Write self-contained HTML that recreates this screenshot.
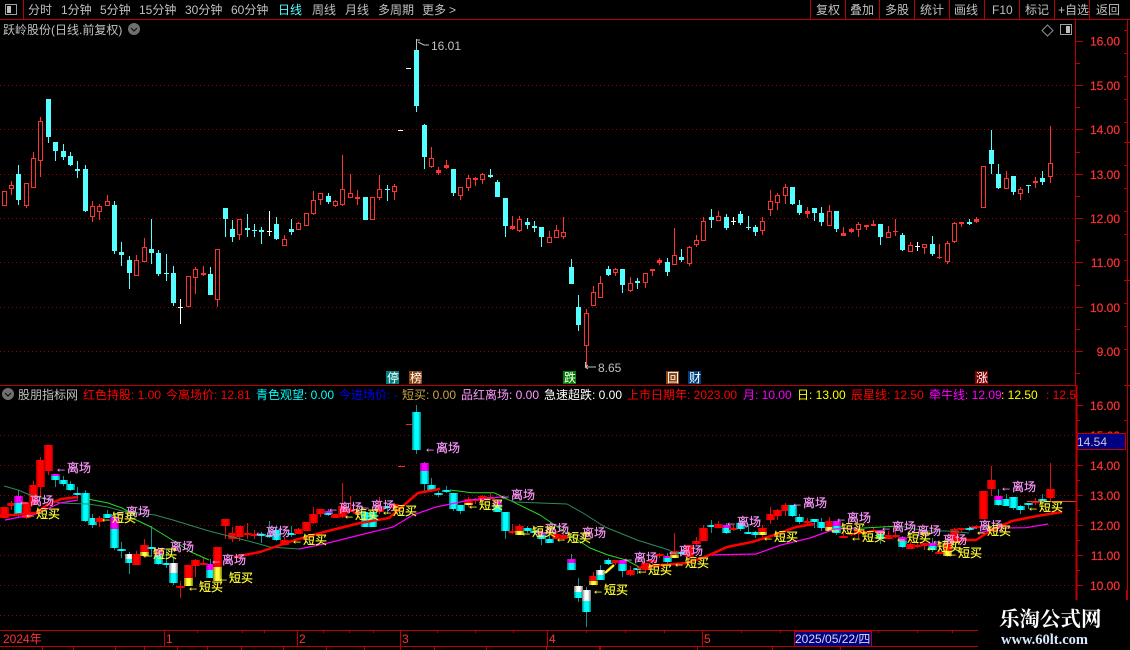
<!DOCTYPE html>
<html lang="zh"><head><meta charset="utf-8"><title>K线图</title>
<style>
html,body{margin:0;padding:0;background:#000;width:1130px;height:650px;overflow:hidden}
svg{display:block;position:absolute;left:0;top:0}
text{font-family:"Liberation Sans","WenQuanYi Zen Hei","Noto Sans CJK SC",sans-serif;font-size:12px;white-space:pre}
.m text{fill:#c0c0c0}
.ax text{fill:#ff3232;stroke:#ff3232;stroke-width:.2;text-anchor:end;font-size:12px}
.p text{fill:#ff99ff;stroke:#ff99ff;stroke-width:.2}
.b text{fill:#ffff33;stroke:#ffff33;stroke-width:.2}
</style></head><body>
<svg id="s" width="1130" height="650" viewBox="0 0 1130 650" xmlns="http://www.w3.org/2000/svg">
<defs>
<linearGradient id="gc"><stop offset="0" stop-color="#007f7f"/><stop offset=".3" stop-color="#00ffff"/><stop offset=".7" stop-color="#00ffff"/><stop offset="1" stop-color="#007f7f"/></linearGradient>
<linearGradient id="gr"><stop offset="0" stop-color="#a00000"/><stop offset=".25" stop-color="#ff0000"/><stop offset=".75" stop-color="#ff0000"/><stop offset="1" stop-color="#a00000"/></linearGradient>
<linearGradient id="gm"><stop offset="0" stop-color="#900090"/><stop offset=".3" stop-color="#ff00ff"/><stop offset=".7" stop-color="#ff00ff"/><stop offset="1" stop-color="#900090"/></linearGradient>
<linearGradient id="gw"><stop offset="0" stop-color="#777"/><stop offset=".35" stop-color="#fff"/><stop offset=".65" stop-color="#fff"/><stop offset="1" stop-color="#777"/></linearGradient>
<linearGradient id="gy"><stop offset="0" stop-color="#808000"/><stop offset=".35" stop-color="#ffff40"/><stop offset=".65" stop-color="#ffff40"/><stop offset="1" stop-color="#808000"/></linearGradient>
</defs>
<rect width="1130" height="650" fill="#000"/>
<g stroke="#a00000" stroke-width="1" stroke-dasharray="1 3" fill="none">
<path d="M0 85.5H1076M0 129.5H1076M0 174.5H1076M0 218.5H1076M0 262.5H1076M0 307.5H1076M0 351.5H1076M0 435.5H1076M0 465.5H1076M0 495.5H1076M0 525.5H1076M0 555.5H1076M0 585.5H1076M0 615.5H978"/>
</g>
<g id="top" shape-rendering="crispEdges"></g>
<g id="bot" shape-rendering="crispEdges"></g>

<!-- lower panel lines -->
<g fill="none" stroke-linejoin="round">
<polyline stroke="#2e8b57" stroke-width="1" points="4,486 18,490 30,495 60,503 88,504 108,507 122,511 155,515 173,520 209,531 252,542 270,547 299,549"/>
<polyline stroke="#22dd22" stroke-width="1" points="88,499 108,503 122,508 135,515"/>
<polyline stroke="#22dd22" stroke-width="1" points="130,517 151,527 169,538 191,552 209,560"/>
<polyline stroke="#22dd22" stroke-width="1" points="450,490 472,492.7 494,492.7 505,498 540,515"/>
<polyline stroke="#2e8b57" stroke-width="1" points="500,497 515,502 540,503 567,504 583,513 605,527 637,540 669,550 677,555"/>
<polyline stroke="#22dd22" stroke-width="1" points="540,515 565,532 590,548 608,555 626,560 641,568"/>
<polyline stroke="#2e8b57" stroke-width="1" points="900,526 925,531 947,531 969,533"/>
<polyline stroke="#22dd22" stroke-width="1" points="832,529 864,528 900,526"/>
<polyline stroke="#ff00ff" stroke-width="1.2" points="5,520 36,514 60,503 78,500"/>
<polyline stroke="#ff00ff" stroke-width="1.2" points="299,549 324,544 360,535 393,527 413,515 436,507 470,500 501,497"/>
<polyline stroke="#ff00ff" stroke-width="1.2" points="709,555 756,554 781,545 810,538 835,529 860,528"/>
<polyline stroke="#ff00ff" stroke-width="1.2" points="979,533 997,528 1026,527.7 1048,524"/>
<polyline stroke="#ff0000" stroke-width="2.5" points="0,516 36,513 47,505 61,499 78,497"/>
<polyline stroke="#ff0000" stroke-width="2.5" points="234,557 260,552 295,540 324,532 360,523 389,518 396,512 418,493 440,489"/>
<polyline stroke="#ffff20" stroke-width="2.5" points="605,573 614,565"/>
<polyline stroke="#ff0000" stroke-width="2.5" points="637,568 662,565 687,563 705,557 727,547 752,542 774,535 796,527 814,524"/>
<polyline stroke="#ff0000" stroke-width="2.5" points="947,540 976,540 990,531 1012,521 1037,516 1062,512"/>
<path d="M1027 501.5H1076" stroke="#ff3020" stroke-width="1"/>
</g>

<!-- top bar -->
<g stroke="#c00000" fill="none" shape-rendering="crispEdges">
<path d="M0 19.5H1130M23.5 0V19M810.5 0V19M845.5 0V19M879.5 0V19M914.5 0V19M949.5 0V19M984.5 0V19M1019.5 0V19M1054.5 0V19M1089.5 0V19"/>
<path d="M0 385.5H1076M1075.5 20V385"/>
<path d="M0 630.5H978M0 646.5H978M164.5 630V646M297.5 630V646M400.5 630V646M547.5 630V646M702.5 630V646"/>
<path d="M1076.5 385V600" stroke-width="2"/>
<path d="M1127.5 20V600"/>
<path d="M1076 41.5H1083M1076 63.5H1080M1076 85.5H1083M1076 107.5H1080M1076 129.5H1083M1076 152.5H1080M1076 174.5H1083M1076 196.5H1080M1076 218.5H1083M1076 240.5H1080M1076 262.5H1083M1076 285.5H1080M1076 307.5H1083M1076 329.5H1080M1076 351.5H1083M1076 373.5H1080"/>
<path d="M1076 405.5H1083M1076 420.5H1080M1076 465.5H1083M1076 480.5H1080M1076 495.5H1083M1076 510.5H1080M1076 525.5H1083M1076 540.5H1080M1076 555.5H1083M1076 570.5H1080M1076 585.5H1083"/>
<path d="M1124 30.5H1127M1124 53.5H1127M1124 76.5H1127M1124 99.5H1127M1124 122.5H1127M1124 142.5H1130M1124 165.5H1127M1124 188.5H1127M1124 211.5H1127M1124 234.5H1127M1124 260.5H1127M1124 280.5H1130M1124 303.5H1127M1124 326.5H1127M1124 349.5H1127M1124 385.5H1130M1124 420.5H1127"/>
<path d="M197.5 630V633M242.5 630V633M264.5 630V633M323.5 630V633M349.5 630V633M373.5 630V633M437.5 630V633M475.5 630V633M513.5 630V633M586.5 630V633M625.5 630V633M664.5 630V633M741.5 630V633M780.5 630V633M878.5 630V633M917.5 630V633M952.5 630V633"/>
<path d="M42.5 646V650M73.5 646V650M115.5 646V650M144.5 646V650M177.5 646V650M207.5 646V650M241.5 646V650M283.5 646V650M326.5 646V650M364.5 646V650M400.5 646V650M434.5 646V650M486.5 646V650M546.5 646V650M600.5 646V650M599.5 646V650M697.5 646V650M772.5 646V650M840.5 646V650"/>
</g>
<g fill="none" stroke="#a0a0a0" shape-rendering="crispEdges">
<rect x="5.5" y="4.5" width="11" height="10" stroke-width="1"/>
<rect x="1060.5" y="24.5" width="11" height="10" stroke-width="1"/>
</g>
<rect x="7" y="6" width="4" height="7" fill="#c0c0c0"/>
<rect x="1066" y="26" width="4" height="7" fill="#c0c0c0"/>
<path d="M1047.5 25L1053 30.5L1047.5 36L1042 30.5Z" fill="none" stroke="#909090"/>

<g class="m">
<text x="28" y="14">分时</text><text x="61" y="14">1分钟</text><text x="100" y="14">5分钟</text><text x="139" y="14">15分钟</text><text x="185" y="14">30分钟</text><text x="231" y="14">60分钟</text>
<text x="278" y="14" style="fill:#55ffff">日线</text>
<text x="312" y="14">周线</text><text x="345" y="14">月线</text><text x="378" y="14">多周期</text><text x="422" y="14">更多</text><text x="449" y="14">&gt;</text>
<text x="816" y="14">复权</text><text x="850" y="14">叠加</text><text x="885" y="14">多股</text><text x="920" y="14">统计</text><text x="954" y="14">画线</text><text x="992" y="14">F10</text><text x="1025" y="14">标记</text><text x="1058" y="14">+自选</text><text x="1096" y="14">返回</text>
<text x="3" y="34">跃岭股份(日线.前复权)</text>
<text x="18" y="399">股朋指标网</text>
<text x="431" y="50">16.01</text>
<text x="598" y="372">8.65</text>
</g>
<circle cx="134" cy="29" r="6" fill="#707070"/><path d="M131 28l3 3 3-3" stroke="#111" fill="none" stroke-width="1.2"/>
<circle cx="8" cy="394" r="6" fill="#707070"/><path d="M5 393l3 3 3-3" stroke="#111" fill="none" stroke-width="1.2"/>
<path d="M416.5 39V50M417 40h3M418 42l6 3h5" stroke="#c0c0c0" fill="none"/>
<path d="M585.5 362V367H596M585 367l3-2M585 367l3 2" stroke="#c0c0c0" fill="none"/>

<!-- signals -->
<g shape-rendering="crispEdges">
<rect x="386" y="371" width="13" height="13" fill="#008080"/><rect x="409" y="371" width="13" height="13" fill="#8b4513"/><rect x="563" y="371" width="13" height="13" fill="#008000"/><rect x="666" y="371" width="13" height="13" fill="#8b4513"/><rect x="688" y="371" width="13" height="13" fill="#004080"/><rect x="975" y="371" width="13" height="13" fill="#800000"/>
</g>
<g fill="#fff">
<text x="387" y="382" style="fill:#fff">停</text><text x="410" y="382" style="fill:#fff">榜</text><text x="564" y="382" style="fill:#fff">跌</text><text x="667" y="382" style="fill:#fff">回</text><text x="689" y="382" style="fill:#fff">财</text><text x="976" y="382" style="fill:#fff">涨</text>
</g>

<!-- axis -->
<g class="ax">
<text x="1120" y="45.5">16.00</text><text x="1120" y="90">15.00</text><text x="1120" y="134">14.00</text><text x="1120" y="179">13.00</text><text x="1120" y="223">12.00</text><text x="1120" y="267">11.00</text><text x="1120" y="312">10.00</text><text x="1120" y="356">9.00</text>
<text x="1120" y="410">16.00</text><text x="1120" y="440">15.00</text><text x="1120" y="470">14.00</text><text x="1120" y="500">13.00</text><text x="1120" y="530">12.00</text><text x="1120" y="560">11.00</text><text x="1120" y="590">10.00</text>
</g>
<rect x="1077.5" y="433.5" width="48" height="16" fill="#000080" stroke="#c00000" shape-rendering="crispEdges"/>
<text x="1077" y="446" style="fill:#c8c8d8">14.54</text>

<!-- legend -->
<svg x="0" y="386" width="1076" height="18" viewBox="0 386 1076 18">
<text x="83" y="399" fill="#ff0000">红色持股: 1.00</text>
<text x="166" y="399" fill="#ff0000">今离场价: 12.81</text>
<text x="256" y="399" fill="#00ffff">青色观望: 0.00</text>
<text x="339" y="399" fill="#0000ff">今进场价: -</text>
<text x="402" y="399" fill="#c8a840">短买: 0.00</text>
<text x="461" y="399" fill="#ff99ff">品红离场: 0.00</text>
<text x="544" y="399" fill="#ffffff">急速超跌: 0.00</text>
<text x="627" y="399" fill="#ff0000">上市日期年: 2023.00</text>
<text x="743" y="399" fill="#ff00ff">月: 10.00</text>
<text x="797" y="399" fill="#ffff00">日: 13.00</text>
<text x="851" y="399" fill="#ff0000">辰星线: 12.50</text>
<text x="929" y="399" fill="#ff00ff">牵牛线: 12.09</text>
<text x="1001" y="399" fill="#ffff00">: 12.50</text>
<text x="1046" y="399" fill="#ff0000">: 12.50</text>
</svg>

<!-- labels -->
<g class="p">
<text x="55" y="472">←离场</text><text x="18" y="505">←离场</text><text x="114" y="516">←离场</text><text x="158" y="551">←离场</text><text x="210" y="564">←离场</text><text x="254" y="536">←离场</text><text x="327" y="512">←离场</text><text x="359" y="510">←离场</text><text x="424" y="452">←离场</text><text x="499" y="499">←离场</text><text x="533" y="533">←离场</text><text x="570" y="537">←离场</text><text x="622" y="562">←离场</text><text x="667" y="555">←离场</text><text x="725" y="526">←离场</text><text x="791" y="507">←离场</text><text x="835" y="522">←离场</text><text x="880" y="531">←离场</text><text x="905" y="535">←离场</text><text x="931" y="544">←离场</text><text x="967" y="530">←离场</text><text x="1000" y="491">←离场</text>
</g>
<g class="b">
<text x="24" y="518">←短买</text><text x="100" y="522">←短买</text><text x="141" y="558">←短买</text><text x="187" y="591">←短买</text><text x="217" y="582">←短买</text><text x="291" y="544">←短买</text><text x="343" y="519">←短买</text><text x="381" y="515">←短买</text><text x="467" y="509">←短买</text><text x="520" y="536">←短买</text><text x="555" y="542">←短买</text><text x="592" y="594">←短买</text><text x="636" y="574">←短买</text><text x="673" y="567">←短买</text><text x="762" y="541">←短买</text><text x="829" y="533">←短买</text><text x="850" y="541">←短买</text><text x="895" y="542">←短买</text><text x="925" y="551">←短买</text><text x="946" y="557">←短买</text><text x="975" y="535">←短买</text><text x="1027" y="511">←短买</text>
</g>

<!-- date axis -->
<g>
<text x="3" y="643" fill="#ff3232">2024年</text><text x="166" y="643" fill="#ff3232">1</text><text x="299" y="643" fill="#ff3232">2</text><text x="402" y="643" fill="#ff3232">3</text><text x="549" y="643" fill="#ff3232">4</text><text x="704" y="643" fill="#ff3232">5</text>
<rect x="794.5" y="631.5" width="77" height="15" fill="#000080" stroke="#c00000" shape-rendering="crispEdges"/>
<text x="795" y="643" fill="#d8d8e8" style="font-size:12px">2025/05/22/四</text>
</g>

<!-- watermark -->
<rect x="978" y="600" width="152" height="50" fill="#000"/>
<path d="M1076.5 590V600M1126.5 590V600" stroke="#c00000" fill="none"/>
<text x="999" y="626" fill="#fff" style="font-family:'Noto Serif CJK SC','Liberation Serif',serif;font-size:20.5px;font-weight:bold">乐淘公式网</text>
<text x="1001" y="644" fill="#d8e8ff" style="font-family:'Liberation Serif',serif;font-size:14.5px;font-weight:bold">www.60lt.com</text>
</svg>
<script>
var C=[
"r191,191,206,206","r181,185,189,195","c165,174,200,205","r183,183,206,208","r152,158,188,188","r117,121,161,177","c99,99,137,143","c142,142,151,161","c144,151,157,160","c152,156,165,166",
"c161,169,171,178","c165,169,211,212","r201,206,217,222","r204,206,212,220","r195,201,206,206","c201,205,251,254","c242,252,255,266","c256,260,273,289","r255,260,276,276","r238,247,262,262",
"c219,249,253,264","c250,253,274,276","c254,273,274,281","c266,273,303,306","w299,307,308,324","r276,276,307,307","r267,269,278,294","r266,273,275,276","c267,274,295,295","r249,249,300,307",
"c208,208,219,237","c220,229,237,242","r219,219,235,240","c214,228,230,237","c224,230,231,237","c227,230,232,244","w211,231,232,236","c217,224,239,240","r235,239,246,246","c219,229,232,235",
"r222,223,230,230","r213,213,226,226","r191,200,214,215","r193,193,200,205","c193,196,202,204","r200,201,206,207","r155,189,205,206","r174,193,198,198","r190,197,199,205","c197,197,220,220",
"r197,197,220,220","r175,189,198,200","c185,189,190,201","r184,186,192,200","d130,130,131,131","d68,68,69,69","c39,50,106,112","c124,125,157,169","r147,158,167,168","r167,170,173,175",
"r160,165,168,169","c169,169,193,196","r187,187,196,200","r175,178,188,191","r177,178,180,186","r173,174,180,184","c169,175,177,178","c180,182,197,197","c198,198,226,237","r216,226,229,230",
"r216,219,231,232","c218,222,225,229","c221,226,228,232","c227,227,237,247","r231,237,243,243","r225,230,238,238","r217,232,237,239","c259,267,284,284","c295,307,325,331","r309,313,346,367",
"r286,292,306,306","r276,283,298,298","c266,269,275,276","r268,269,273,276","c269,269,285,293","r277,283,291,292","c278,281,283,289","r273,273,283,288","r269,269,271,276","r258,260,263,265",
"c258,262,272,276","r228,255,265,265","c249,257,260,262","r246,247,264,266","r235,240,245,247","r217,221,241,241","c209,217,220,228","r211,216,221,221","c214,217,228,230","w217,221,222,225",
"c211,214,223,225","c216,227,228,230","c225,227,232,236","r217,221,231,235","r190,201,210,216","r193,195,203,210","r184,187,196,204","c187,187,204,205","c200,205,213,215","r207,211,214,218",
"c208,208,213,221","c207,213,222,226","r205,211,226,226","c211,211,229,232","r227,233,236,236","r228,229,232,233","r222,224,230,237","r225,225,227,230","r220,224,226,226","c224,224,237,245",
"r226,232,238,238","r219,231,232,236","c233,235,250,251","r242,245,252,252","w242,246,247,251","r244,244,248,254","c236,244,254,256","r244,257,258,259","r241,243,262,264","r222,223,242,243",
"r222,222,224,227","c219,222,224,225","r217,219,222,223","r166,166,208,208","c130,150,164,174","c164,174,188,189","r171,178,189,189","c176,176,192,195","r187,189,194,200","c185,185,186,193",
"r177,181,183,188","c171,178,182,185","r126,163,177,183"];
var stylesB={2:'m',7:'m',15:'m',21:'m',28:'m',44:'m',57:'m',67:'m',73:'m',77:'m',84:'m',90:'m',98:'m',113:'m',119:'m',122:'m',126:'m',135:'m',
17:'w',23:'w',78:'w',79:'w',81:'w',
19:'y',25:'y',29:'y',63:'y',70:'y',80:'y',91:'y',103:'y',112:'y',128:'y',
6:'r',50:'c',58:'c',59:'c',60:'c',62:'c',134:'r',136:'c',138:'c',36:'c',14:'c',12:'c',74:'c',66:'r',30:'r',31:'r',33:'r',34:'r'};
function R(x,y,w,h,f,extra){return '<rect x="'+x+'" y="'+y+'" width="'+w+'" height="'+h+'" fill="'+f+'"'+(extra||'')+'/>';}
var t='',b='';
function m(y){return 405.7+(y-40.7)*30/44.3;}
C.forEach(function(s,i){
 var k=s[0],v=s.slice(1).split(',').map(Number),hi=v[0],tp=v[1],bt=v[2],lo=v[3];
 var x=Math.round(3.6+i*7.367);
 if(k=='d'){t+=R(x-3,tp,5,1,'#fff');b+=R(x-3,Math.round(m(tp)),7,1,'#ff2020');return;}
 var col=k=='c'?'#55ffff':(k=='w'?'#ffffff':'#ff3232');
 t+=R(x,hi,1,Math.max(1,lo-hi),col);
 var h=Math.max(bt-tp,1);
 if(k=='r'&&h>3){t+=R(x-1.5,tp+.5,4,h-1,'#000',' stroke="#ff3232" stroke-width="1"');}
 else t+=R(x-2,tp,5,h,col);
 var st=stylesB[i]||(k=='c'?'c':'r');
 var yh=Math.round(m(hi)),yl=Math.round(m(lo)),yt=Math.round(m(tp)),yb=Math.round(m(bt));
 var H=Math.max(yb-yt,2),X=x-4,W=9;
 b+=R(x,yh,1,Math.max(1,yl-yh),(st=='r'||st=='y')?'#e01010':'#109090');
 if(st=='r')b+=R(X,yt,W,H,'url(#gr)');
 else if(st=='c')b+=R(X,yt,W,H,'url(#gc)');
 else if(st=='m'){var a=Math.round(H*.4);b+=R(X,yt,W,a,'url(#gm)')+R(X,yt+a,W,H-a,'url(#gc)');}
 else if(st=='w'){var a=Math.round(H*.5);b+=R(X,yt,W,a,'url(#gw)')+R(X,yt+a,W,H-a,'url(#gc)');}
 else if(st=='y'){var a=Math.round(H*.6);b+=R(X,yt,W,a,'url(#gr)')+R(X,yt+a,W,H-a,'url(#gy)');}
});
document.getElementById('top').innerHTML=t;
document.getElementById('bot').innerHTML=b;
</script>
</body></html>
